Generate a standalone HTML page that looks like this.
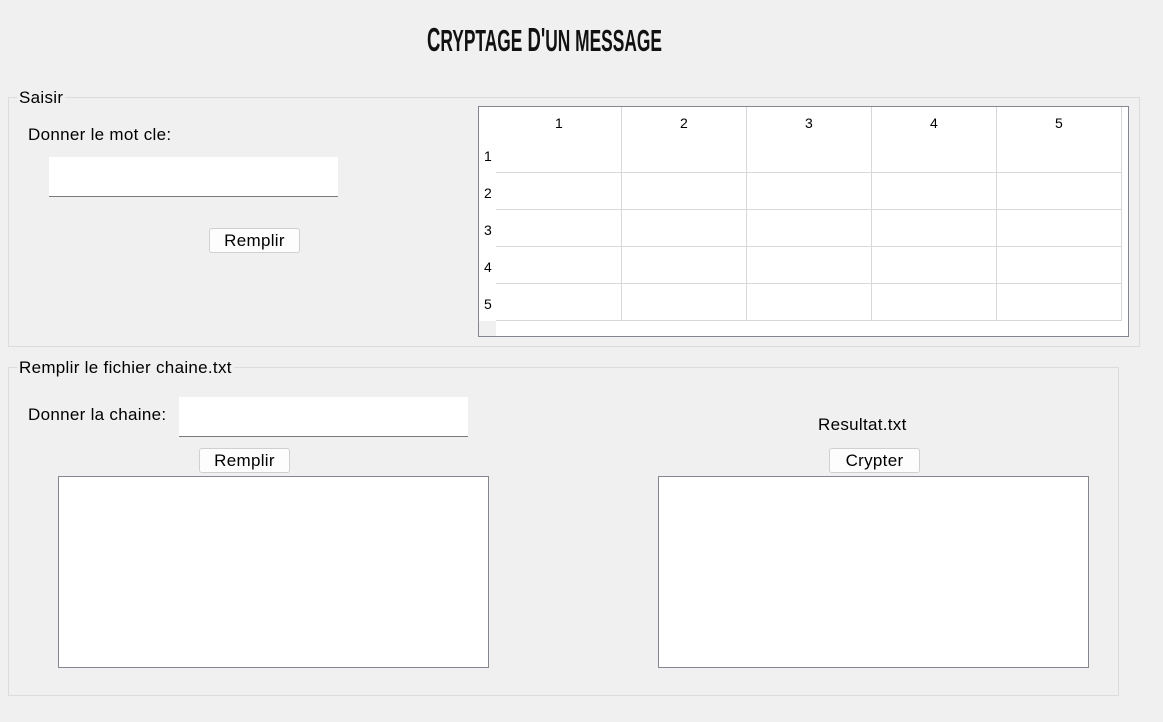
<!DOCTYPE html>
<html><head><meta charset="utf-8"><style>
body{margin:0;width:1163px;height:722px;background:#f0f0f0;font-family:"Liberation Sans",sans-serif;font-size:17px;letter-spacing:0.3px;color:#000;position:relative;overflow:hidden}
.a{position:absolute}
.grp{position:absolute;border:1px solid #dcdcdc}
.lg{position:absolute;background:#f0f0f0;padding:0 2px;line-height:18px}
.inp{position:absolute;background:#fff;border-bottom:1px solid #7a7a7a}
.btn{position:absolute;background:#fdfdfd;border:1px solid #d0d0d0;border-radius:3px;text-align:center;line-height:23px}
.box{position:absolute;background:#fff;border:1px solid #828790}
</style></head><body>
<div class="a" style="left:427px;top:20px;width:236px;height:40px;overflow:visible">
<div style="font-weight:bold;font-size:33px;letter-spacing:0;transform:scaleX(0.56);transform-origin:0 0;white-space:nowrap;line-height:40px;color:#111">C<span style="font-size:31px">RYPTAGE</span> D'<span style="font-size:31px">UN MESSAGE</span></div></div>

<div class="grp" style="left:8px;top:97px;width:1130px;height:248px"></div>
<div class="lg" style="left:17px;top:89px">Saisir</div>
<div class="a" style="left:28px;top:126px;line-height:18px">Donner le mot cle:</div>
<div class="inp" style="left:49px;top:157px;width:289px;height:39px"></div>
<div class="btn" style="left:209px;top:228px;width:89px;height:23px">Remplir</div>

<div class="box" style="left:478px;top:106px;width:649px;height:229px;overflow:hidden">
<svg width="649" height="229" style="position:absolute;left:0;top:0">
<rect x="0" y="214" width="17" height="15" fill="#f0f0f0"/>
<g stroke="#d8d8d8" stroke-width="1">
<line x1="142.5" y1="0" x2="142.5" y2="214"/><line x1="267.5" y1="0" x2="267.5" y2="214"/><line x1="392.5" y1="0" x2="392.5" y2="214"/><line x1="517.5" y1="0" x2="517.5" y2="214"/><line x1="642.5" y1="0" x2="642.5" y2="214"/>
<line x1="17" y1="65.5" x2="643" y2="65.5"/><line x1="17" y1="102.5" x2="643" y2="102.5"/><line x1="17" y1="139.5" x2="643" y2="139.5"/><line x1="17" y1="176.5" x2="643" y2="176.5"/><line x1="17" y1="213.5" x2="643" y2="213.5"/>
</g>
<g font-family="Liberation Sans" font-size="14" text-anchor="middle" fill="#000">
<text x="80" y="21">1</text><text x="205" y="21">2</text><text x="330" y="21">3</text><text x="455" y="21">4</text><text x="580" y="21">5</text>
<text x="9" y="54">1</text><text x="9" y="91">2</text><text x="9" y="128">3</text><text x="9" y="165">4</text><text x="9" y="202">5</text>
</g></svg></div>

<div class="grp" style="left:8px;top:367px;width:1109px;height:327px"></div>
<div class="lg" style="left:17px;top:359px">Remplir le fichier chaine.txt</div>
<div class="a" style="left:28px;top:406px;line-height:18px">Donner la chaine:</div>
<div class="inp" style="left:179px;top:397px;width:289px;height:39px"></div>
<div class="a" style="left:818px;top:416px;line-height:18px">Resultat.txt</div>
<div class="btn" style="left:199px;top:448px;width:89px;height:23px">Remplir</div>
<div class="btn" style="left:829px;top:448px;width:89px;height:23px">Crypter</div>
<div class="box" style="left:58px;top:476px;width:429px;height:190px"></div>
<div class="box" style="left:658px;top:476px;width:429px;height:190px"></div>
</body></html>
